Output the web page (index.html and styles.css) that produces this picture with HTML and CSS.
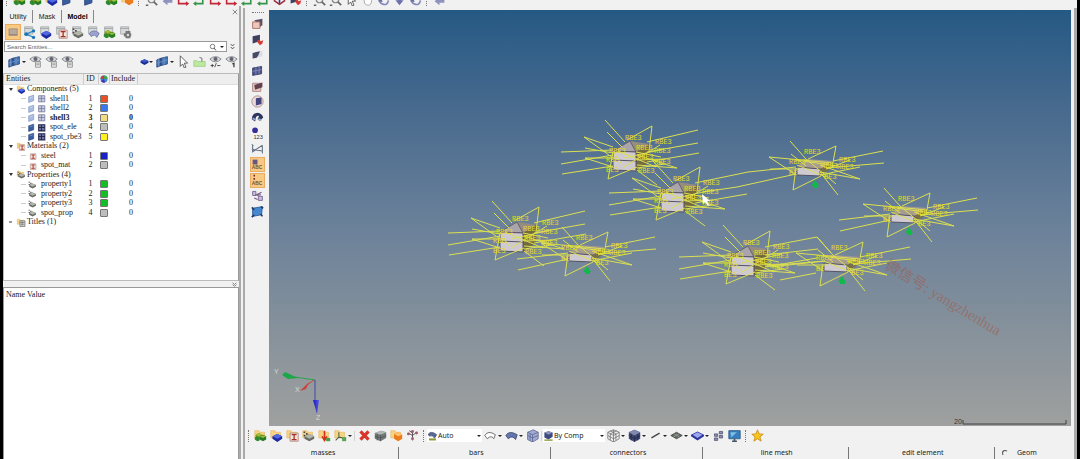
FILE: index.html
```html
<!DOCTYPE html>
<html lang="en">
<head>
<meta charset="utf-8">
<title>Model Browser</title>
<link rel="stylesheet" href="styles.css">
</head>
<body>
<svg class="defs" aria-hidden="true">
  <symbol id="folder" viewBox="0 0 16 16"><path d="M1 2h5l1 2h6v7H1z" fill="#f7d383" stroke="#e2b45c" stroke-width=".7"/></symbol>
  <symbol id="pile" viewBox="0 0 16 16"><path d="m6 5 4 2v4l-4 2-4-2V7z" fill="#8b9419"/><path d="m11 7 4 2v4l-4 2-4-2V9z" fill="#267c22"/><path d="m4 9 3 2v3l-3 1-3-2v-3z" fill="#2d8a32"/><path d="m6 5 4 2-4 2-4-2zm5 3 4 1-4 2-4-2z" fill="#9bbf3d"/></symbol>
  <symbol id="blob" viewBox="0 0 16 16"><path d="m9 6 6 3v3l-6 4-6-4V9z" fill="#1c2aa3"/><path d="m9 6 6 3-6 3-6-3z" fill="#5268e2"/></symbol>
  <symbol id="beam" viewBox="0 0 16 16"><path d="M5 5h10v10H5z" fill="#f1e7df" stroke="#a98077"/><path d="M7 7h6M7 13h6M10 7v6" stroke="#ab2f27" stroke-width="1.6"/></symbol>
  <symbol id="block" viewBox="0 0 16 16"><path d="m9 6 6 3v3l-6 3-6-3V9z" fill="#686b64"/><path d="m9 6 6 3-6 3-6-3z" fill="#b3b6aa"/><path d="M2 3h2v2H2zm0 4h2v2H2zm3-2h2v2H5z" fill="#42443f"/></symbol>
  <symbol id="f-pile" viewBox="0 0 16 16"><use href="#folder"/><use href="#pile"/></symbol>
  <symbol id="f-blob" viewBox="0 0 16 16"><use href="#folder"/><use href="#blob"/></symbol>
  <symbol id="f-beam" viewBox="0 0 16 16"><use href="#folder"/><use href="#beam"/></symbol>
  <symbol id="f-block" viewBox="0 0 16 16"><use href="#folder"/><use href="#block"/></symbol>
  <symbol id="f-load" viewBox="0 0 16 16"><use href="#folder"/><path d="M8 2v11M5 9l3 5 3-5" stroke="#d4301d" stroke-width="2" fill="none"/><path d="M10 11h5v4h-5z" fill="#4b9b42"/></symbol>
  <symbol id="f-axis" viewBox="0 0 16 16"><use href="#folder"/><path d="M6 4v6l-4 4m4-4 5 1" stroke="#4b604a" stroke-width="1.3" fill="none"/><path d="M10 10h5v5h-5z" fill="#5aa553"/></symbol>
  <symbol id="f-list" viewBox="0 0 16 16"><use href="#folder"/><path d="M6 5h9v10H6z" fill="#ddd" stroke="#444"/><path d="M7 8h7M7 11h7M10 6v8" stroke="#555"/></symbol>
  <symbol id="page" viewBox="0 0 16 16"><path d="M2 1h10v9H2z" fill="#d7d9da" stroke="#a4a8aa"/><path d="M2 3h10" stroke="#9a9ea0"/></symbol>
  <symbol id="p-link" viewBox="0 0 16 16"><use href="#page"/><path d="M4 10 13 6M4 10l9 4" stroke="#368bc8" stroke-width="1.5"/><g fill="#1976ba"><circle cx="4" cy="10" r="2.4"/><circle cx="13" cy="6" r="2"/><circle cx="13" cy="14" r="2"/></g></symbol>
  <symbol id="p-blob" viewBox="0 0 16 16"><use href="#page"/><use href="#blob"/></symbol>
  <symbol id="p-beam" viewBox="0 0 16 16"><use href="#page"/><use href="#beam"/></symbol>
  <symbol id="p-block" viewBox="0 0 16 16"><use href="#page"/><use href="#block"/></symbol>
  <symbol id="p-surf" viewBox="0 0 16 16"><use href="#page"/><path d="M3 9q5-6 12 0l-3 5q-2-5-7-1z" fill="#9ca3ce" stroke="#6972a5"/></symbol>
  <symbol id="p-pile" viewBox="0 0 16 16"><use href="#page"/><use href="#pile"/></symbol>
  <symbol id="p-gear" viewBox="0 0 16 16"><use href="#page"/><path d="M8 6h6v9H8zM6 9h9v4H6z" fill="#777"/><circle cx="11" cy="11" r="1.5" fill="#ddd"/></symbol>
  <symbol id="screen" viewBox="0 0 16 16"><path d="M2 4q0-1 2-1h9v9H2z" fill="#94877a"/><path d="M3 4h9v6H3z" fill="#b7a99b"/></symbol>
  <symbol id="mesh" viewBox="0 0 16 16"><path d="m1 6 5-2v9l-5 2zm5-2 8-2v9l-8 2z" fill="#4777b4" stroke="#263f75"/><path d="M3 5v9m7-11v9M1 10l13-4" stroke="#6f97cc"/></symbol>
  <symbol id="eye" viewBox="0 0 16 16"><path d="M1 5q7-6 14 0-7 7-14 0z" fill="#ddd" stroke="#777"/><circle cx="8" cy="5" r="2.5" fill="#606475"/></symbol>
  <symbol id="eye-list" viewBox="0 0 16 16"><use href="#eye"/><path d="M8 8h6v7H8zM9 10h4m-4 2h4" fill="#eee" stroke="#888"/></symbol>
  <symbol id="eye-pm" viewBox="0 0 16 16"><use href="#eye"/><path d="M2 13h4M4 11v4m3 0 2-5m1 3h4" stroke="#333"/></symbol>
  <symbol id="eye-one" viewBox="0 0 16 16"><use href="#eye"/><path d="m9 11 2-1v5" fill="none" stroke="#333" stroke-width="1.5"/></symbol>
  <symbol id="gem" viewBox="0 0 16 16"><path d="m8 4 7 3v3l-7 4-7-4V7z" fill="#172b94"/><path d="m8 4 7 3-7 3-7-3z" fill="#4055ca"/></symbol>
  <symbol id="cursor" viewBox="0 0 16 16"><path d="m4 1 9 9H9l2 5-2 1-2-5-3 3z" fill="#fff" stroke="#444"/></symbol>
  <symbol id="green" viewBox="0 0 16 16"><path d="M1 7q4-1 5 1h9v6H1z" fill="#bce8a0" stroke="#a1cf86"/><path d="m8 3 3 1v4" stroke="#555" fill="none"/></symbol>
  <symbol id="sheet" viewBox="0 0 16 16"><path d="m2 5 9-3v10l-9 3z" fill="#a8badd" stroke="#7591c6"/><path d="m4 7 5-2" stroke="#dce5f4"/></symbol>
  <symbol id="sheet-on" viewBox="0 0 16 16"><path d="m2 5 9-3v10l-9 3z" fill="#385da0" stroke="#274278"/><path d="m4 7 5-2" stroke="#96b2dd"/></symbol>
  <symbol id="grid" viewBox="0 0 16 16"><path d="M2 3h11v11H2zM2 8h11M7 3v11" fill="#c8cbe0" stroke="#777b9e" stroke-width="1.4"/></symbol>
  <symbol id="grid-on" viewBox="0 0 16 16"><path d="M2 3h11v11H2zM2 8h11M7 3v11" fill="#747aa5" stroke="#26294d" stroke-width="1.8"/></symbol>
  <symbol id="wheel" viewBox="0 0 16 16"><circle cx="8" cy="8" r="7" fill="#358be0"/><path d="M8 8V1a7 7 0 0 1 7 7z" fill="#3ca54a"/><path d="M8 8H1a7 7 0 0 1 7-7z" fill="#c43c4a"/><path d="m8 8 2 7a7 7 0 0 1-8-3z" fill="#5030a0"/></symbol>
  <symbol id="x-red" viewBox="0 0 16 16"><path d="m3 3 10 10M13 3 3 13" stroke="#d83429" stroke-width="4"/></symbol>
  <symbol id="cube-gray" viewBox="0 0 16 16"><path d="m1 5 8-3 6 2v7l-7 4-7-3z" fill="#737878"/><path d="m1 5 8-3 6 2-7 3z" fill="#b3b8b7"/><path d="M8 7v8M4 6v8M1 9l7 2 7-3" stroke="#4f5454" fill="none"/></symbol>
  <symbol id="cube-orange" viewBox="0 0 16 16"><use href="#folder"/><path d="m5 6 5-2 5 3v5l-5 3-5-3z" fill="#eb7b1c"/><path d="m5 6 5-2 5 3-5 2z" fill="#ffc26d"/></symbol>
  <symbol id="branches" viewBox="0 0 16 16"><path d="M8 14V3M3 5l5 3 5-4M4 2l4 3" stroke="#555" stroke-width="1.2" fill="none"/><g fill="#a45c68"><circle cx="3" cy="6" r="1.8"/><circle cx="8" cy="3" r="1.8"/><circle cx="13" cy="5" r="1.8"/><circle cx="8" cy="12" r="1.8"/></g></symbol>
  <symbol id="surf-mode" viewBox="0 0 16 16"><path d="M2 5q4-5 12 1l-3 5Q8 6 3 8z" fill="#576897" stroke="#364168"/><path d="M3 13h10" stroke="#8d9830" stroke-width="3"/></symbol>
  <symbol id="surf-line" viewBox="0 0 16 16"><path d="M1 8q4-7 13-1l-2 5Q9 7 4 12z" fill="#fff" stroke="#555"/></symbol>
  <symbol id="surf-fill" viewBox="0 0 16 16"><path d="M1 8q4-7 14-1l-2 6Q9 7 4 12z" fill="#6476ad" stroke="#39466f"/></symbol>
  <symbol id="cube-blue" viewBox="0 0 16 16"><path d="m2 4 7-3 6 3v8l-7 4-6-3z" fill="#a3abd4" stroke="#5e6794"/><path d="m2 4 6 3 7-3M8 7v9M5 6v8m-3-6 6 3 7-3" stroke="#5e6794" fill="none"/></symbol>
  <symbol id="cube-comp" viewBox="0 0 16 16"><path d="m2 3 6-2 6 2v6l-6 4-6-3z" fill="#3e4b80"/><path d="m2 3 6-2 6 2-6 3z" fill="#8791ba"/><path d="M2 14h12" stroke="#8d9830" stroke-width="2"/></symbol>
  <symbol id="cube-wire" viewBox="0 0 16 16"><path d="m1 4 7-3 7 3v8l-7 4-7-4zm0 0 7 4 7-4M8 8v8M1 8l7 4 7-4M4 2l7 4v8M12 2 4 6v8M8 1v7" fill="none" stroke="#727272"/></symbol>
  <symbol id="cube-dark" viewBox="0 0 16 16"><path d="m1 4 7-3 7 3v8l-7 4-7-4z" fill="#41486f"/><path d="m1 4 7-3 7 3-7 4z" fill="#8189ae"/><path d="M8 8v8M4 6v8m8-8v8M1 8l7 4 7-4" stroke="#252a4d" fill="none"/></symbol>
  <symbol id="line" viewBox="0 0 16 16"><path d="m3 11 10-6" stroke="#444" stroke-width="1.7"/></symbol>
  <symbol id="quad" viewBox="0 0 16 16"><path d="m1 8 7-4 7 4-7 4z" fill="#666b66" stroke="#3f443f"/><path d="m5 6 7 4m-1-4-7 4" stroke="#979c97"/></symbol>
  <symbol id="slab" viewBox="0 0 16 16"><path d="m0 7 8-4 8 4v2l-8 5-8-5z" fill="#2d369d"/><path d="m2 7 6-3 6 3-6 4z" fill="#9ca6ef"/></symbol>
  <symbol id="bits" viewBox="0 0 16 16"><path d="M3 6h4v3H3zm6-3h4v3H9zM3 11h4v3H3zm6-3h4v3H9z" fill="#8b91af" stroke="#535873"/></symbol>
  <symbol id="monitor" viewBox="0 0 16 16"><path d="M1 2h14v10H1z" fill="#387ebc" stroke="#295a83"/><path d="M3 4h8L4 10z" fill="#7fc1e5"/><path d="M8 12v2M5 15h6" stroke="#456" stroke-width="2"/></symbol>
  <symbol id="star" viewBox="0 0 16 16"><path d="m8 1 2 5 5 .4-4 3.4 1.5 5.2L8 12l-4.5 3L5 9.800 1 6.400 6 6z" fill="#f9c51c" stroke="#c58c11"/></symbol>
  <symbol id="v-box" viewBox="0 0 16 16"><path d="m4 4 10-2v8l-3 2z" fill="#565164"/><path d="M2 6h9v8H2z" fill="#edc8ba" stroke="#a65e55"/></symbol>
  <symbol id="v-mask" viewBox="0 0 16 16"><path d="m2 4 9-2v8l-9 3z" fill="#3d4160"/><path d="m7 10 3-2 2 2 3-1-1 4-3 2z" fill="#d63a35"/></symbol>
  <symbol id="v-part" viewBox="0 0 16 16"><path d="m2 6 12-3v7L2 13z" fill="#dcdde5"/><path d="m2 6 9-2-2 5-2 3-5 1z" fill="#464b68"/></symbol>
  <symbol id="v-all" viewBox="0 0 16 16"><path d="m2 5 11-2v9L2 14z" fill="#4a5288" stroke="#303765"/><path d="M6 4v9m4-10v9M2 9l11-2" stroke="#8a91bb"/></symbol>
  <symbol id="v-win" viewBox="0 0 16 16"><path d="M2 4h10v10H2z" fill="#e8cbc5" stroke="#a07878"/><path d="m4 6 10-3v6l-9 3z" fill="#62404e"/></symbol>
  <symbol id="v-sphere" viewBox="0 0 16 16"><circle cx="8" cy="8" r="7" fill="#eadadb" stroke="#a88"/><path d="m6 4 7-1v8l-7 2z" fill="#45457d"/></symbol>
  <symbol id="v-find" viewBox="0 0 16 16"><path d="M1 10q0-7 7-8 6 1 7 6l-4 4-3-2 2-4q-3-1-4 2l-1 5z" fill="#2d365e"/><path d="m2 9 4 2m3-1 4 1" stroke="#97a8cf" stroke-width="2"/></symbol>
  <symbol id="v-num" viewBox="0 0 16 16"><circle cx="5" cy="4" r="3.500" fill="#3a2c96"/><text x="3" y="15" font-size="7" font-family="Liberation Sans" fill="#333">123</text></symbol>
  <symbol id="v-angle" viewBox="0 0 16 16"><path d="M2 3v10m12-9v10M2 12l12-8M1 9l13 2M1 3l2 2" stroke="#687285" stroke-width="1.3" fill="none"/></symbol>
  <symbol id="v-abc" viewBox="0 0 16 16"><path d="M2 2h6v6H2z" fill="#655784"/><text x="1" y="14" font-size="6" font-weight="700" font-family="Liberation Sans" fill="#75512e">ABC</text></symbol>
  <symbol id="v-dots" viewBox="0 0 16 16"><path d="M3 1h2v2H3zm0 4h2v2H3z" fill="#742e24"/><text x="1" y="14" font-size="6" font-weight="700" font-family="Liberation Sans" fill="#75512e">ABC</text></symbol>
  <symbol id="v-swap" viewBox="0 0 16 16"><path d="M2 3h4v5H2zm7 6h5v5H9z" fill="#c6bedc" stroke="#6c5d8b"/><path d="m5 8 8-4M4 11l4 2m-1-5 5-1" stroke="#7b5a85" stroke-width="1.5"/></symbol>
  <symbol id="v-patch" viewBox="0 0 16 16"><path d="m2 4 12-2-1 10-11 2z" fill="#4389d1" stroke="#2b548d"/><path d="m1 3 3 3m8-4 3 2M1 15l3-3m8-1 2 3" stroke="#223c6c" stroke-width="2"/></symbol>
  <symbol id="axes-red" viewBox="0 0 16 16"><path d="M2 2v11h11" stroke="#c22a38" stroke-width="2" fill="none"/><path d="m11 10 4 3-4 3z" fill="#c22a38"/></symbol>
  <symbol id="axes-green" viewBox="0 0 16 16"><path d="M2 13h10V2" stroke="#369548" stroke-width="2" fill="none"/><path d="m4 10-4 3 4 3z" fill="#369548"/></symbol>
  <symbol id="lens" viewBox="0 0 16 16"><circle cx="8" cy="8" r="4" fill="#eee" stroke="#888" stroke-width="1.500"/><path d="m11 11 4 4M1 15h3" stroke="#666" stroke-width="2"/></symbol>
  <symbol id="turn" viewBox="0 0 16 16"><path d="M3 8q0 5 5 6t6-5" stroke="#8288b8" stroke-width="2" fill="none"/><path d="m1 10 4-4 2 5z" fill="#686fa4"/></symbol>
  <symbol id="back" viewBox="0 0 16 16"><path d="m2 10 6-5v3h6v4H8v3z" fill="#8e93bd"/></symbol>
  <symbol id="down" viewBox="0 0 16 16"><path d="M6 1h4v8h3l-5 6-5-6h3z" fill="#6c72a9"/></symbol>
  <symbol id="iso" viewBox="0 0 16 16"><path d="M8 1v13" stroke="#333f94" stroke-width="2"/><path d="m1 9 7 5 7-5" stroke="#9b3040" stroke-width="2" fill="none"/></symbol>
  <symbol id="hand" viewBox="0 0 16 16"><path d="M4 2v8q0 5 5 5 4 0 4-6V3" stroke="#999" fill="#fff"/></symbol>
</svg>

<main class="app">
  <header class="top-tools" aria-label="Standard toolbar">
    <i class="grip"></i>
    <button aria-label="New"><svg><use href="#f-pile"/></svg></button>
    <button aria-label="Open"><svg><use href="#pile"/></svg></button>
    <button aria-label="Import"><svg><use href="#f-blob"/></svg></button>
    <button aria-label="Save"><svg><use href="#sheet-on"/></svg></button>
    <i class="space"></i>
    <button aria-label="Export"><svg><use href="#sheet-on"/></svg></button>
    <i class="space"></i>
    <button aria-label="Component"><svg><use href="#pile"/></svg></button>
    <button aria-label="Colour"><svg><use href="#cube-orange"/></svg></button>
    <i class="grip"></i>
    <button aria-label="Zoom"><svg><use href="#lens"/></svg></button>
    <button aria-label="Previous view"><svg><use href="#back"/></svg></button>
    <button aria-label="XY view"><svg><use href="#axes-red"/></svg></button>
    <button aria-label="YX view"><svg><use href="#axes-green"/></svg></button>
    <button aria-label="XZ view"><svg><use href="#axes-red"/></svg></button>
    <button aria-label="ZX view"><svg><use href="#axes-red"/></svg></button>
    <button aria-label="YZ view"><svg><use href="#axes-green"/></svg></button>
    <button aria-label="ZY view"><svg><use href="#axes-green"/></svg></button>
    <button aria-label="Iso view"><svg><use href="#iso"/></svg></button>
    <button aria-label="Mask"><svg><use href="#v-mask"/></svg></button>
    <i class="grip"></i>
    <button aria-label="Zoom in"><svg><use href="#lens"/></svg></button>
    <button aria-label="Zoom out"><svg><use href="#lens"/></svg></button>
    <button aria-label="Pointer"><svg><use href="#cursor"/></svg></button>
    <button aria-label="Pan"><svg><use href="#hand"/></svg></button>
    <button aria-label="Rotate left"><svg><use href="#turn"/></svg></button>
    <button aria-label="Down"><svg><use href="#down"/></svg></button>
    <button aria-label="Rotate"><svg><use href="#turn"/></svg></button>
    <i class="grip"></i>
    <button aria-label="Spin"><svg><use href="#back"/></svg></button>
  </header>

  <div class="work">
    <aside class="browser">
      <nav class="tabs">
        <button>Utility</button><button>Mask</button><button class="current">Model</button>
        <button class="close" aria-label="Close"><svg viewBox="0 0 8 8"><path d="m1 1 6 6m0-6L1 7" stroke="#666"/></svg></button>
      </nav>
      <div class="views">
        <button class="pressed" aria-label="Model view"><svg><use href="#screen"/></svg></button>
        <button aria-label="Connections"><svg><use href="#p-link"/></svg></button>
        <button aria-label="Components"><svg><use href="#p-blob"/></svg></button>
        <button aria-label="Materials"><svg><use href="#p-beam"/></svg></button>
        <button aria-label="Properties"><svg><use href="#p-block"/></svg></button>
        <button aria-label="Surfaces"><svg><use href="#p-surf"/></svg></button>
        <button aria-label="Assemblies"><svg><use href="#p-pile"/></svg></button>
        <button aria-label="Loads"><svg><use href="#p-gear"/></svg></button>
      </div>
      <div class="search">
        <label class="field"><input type="text" placeholder="Search Entities..." aria-label="Search Entities"><svg viewBox="0 0 16 16"><circle cx="7" cy="7" r="4.500" fill="none" stroke="#555" stroke-width="1.500"/><path d="m10 10 4 5" stroke="#555" stroke-width="2"/></svg><i class="caret"></i></label>
        <button aria-label="More"><svg viewBox="0 0 8 12"><path d="m1 2 3 3 3-3M1 7l3 3 3-3" fill="none" stroke="#333" stroke-width="1.500"/></svg></button>
      </div>
      <div class="actions">
        <button aria-label="Show mesh"><svg><use href="#mesh"/></svg></button><i class="caret"></i>
        <button aria-label="Show"><svg><use href="#eye-list"/></svg></button>
        <button aria-label="Hide"><svg><use href="#eye-list"/></svg></button>
        <button aria-label="Reverse"><svg><use href="#eye-list"/></svg></button>
        <i class="fill"></i>
        <button class="small" aria-label="Component"><svg><use href="#gem"/></svg></button><i class="caret"></i>
        <button aria-label="Display mesh"><svg><use href="#mesh"/></svg></button><i class="caret"></i>
        <button aria-label="Select"><svg><use href="#cursor"/></svg></button>
        <button aria-label="Add to panel"><svg><use href="#green"/></svg></button>
        <button aria-label="Show or hide"><svg><use href="#eye-pm"/></svg></button>
        <button aria-label="Isolate"><svg><use href="#eye-one"/></svg></button>
      </div>
      <section class="tree">
        <table>
          <thead><tr><th class="name">Entities</th><th class="id">ID</th><th class="color"><svg aria-label="Color"><use href="#wheel"/></svg></th><th class="inc">Include</th><th></th></tr></thead>
          <tbody>
            <tr class="group"><td colspan="5"><span class="cell"><i class="arrow"></i><svg><use href="#f-blob"/></svg>Components (5)</span></td></tr>
            <tr><td><span class="cell leaf"><svg><use href="#sheet"/></svg><svg><use href="#grid"/></svg>shell1</span></td><td>1</td><td><b class="sw red"></b></td><td>0</td><td></td></tr>
            <tr><td><span class="cell leaf"><svg><use href="#sheet"/></svg><svg><use href="#grid"/></svg>shell2</span></td><td>2</td><td><b class="sw blue"></b></td><td>0</td><td></td></tr>
            <tr class="active"><td><span class="cell leaf"><svg><use href="#sheet"/></svg><svg><use href="#grid"/></svg>shell3</span></td><td>3</td><td><b class="sw sand"></b></td><td>0</td><td></td></tr>
            <tr><td><span class="cell leaf"><svg><use href="#sheet-on"/></svg><svg><use href="#grid-on"/></svg>spot_ele</span></td><td>4</td><td><b class="sw gray"></b></td><td>0</td><td></td></tr>
            <tr><td><span class="cell leaf"><svg><use href="#sheet-on"/></svg><svg><use href="#grid-on"/></svg>spot_rbe3</span></td><td>5</td><td><b class="sw yellow"></b></td><td>0</td><td></td></tr>
            <tr class="group"><td colspan="5"><span class="cell"><i class="arrow"></i><svg><use href="#f-beam"/></svg>Materials (2)</span></td></tr>
            <tr><td><span class="cell leaf one"><svg><use href="#beam"/></svg>steel</span></td><td>1</td><td><b class="sw navy"></b></td><td>0</td><td></td></tr>
            <tr><td><span class="cell leaf one"><svg><use href="#beam"/></svg>spot_mat</span></td><td>2</td><td><b class="sw gray"></b></td><td>0</td><td></td></tr>
            <tr class="group"><td colspan="5"><span class="cell"><i class="arrow"></i><svg><use href="#f-block"/></svg>Properties (4)</span></td></tr>
            <tr><td><span class="cell leaf one"><svg><use href="#block"/></svg>property1</span></td><td>1</td><td><b class="sw green"></b></td><td>0</td><td></td></tr>
            <tr><td><span class="cell leaf one"><svg><use href="#block"/></svg>property2</span></td><td>2</td><td><b class="sw green"></b></td><td>0</td><td></td></tr>
            <tr><td><span class="cell leaf one"><svg><use href="#block"/></svg>property3</span></td><td>3</td><td><b class="sw green"></b></td><td>0</td><td></td></tr>
            <tr><td><span class="cell leaf one"><svg><use href="#block"/></svg>spot_prop</span></td><td>4</td><td><b class="sw gray"></b></td><td>0</td><td></td></tr>
            <tr class="group"><td colspan="5"><span class="cell"><i class="arrow shut"></i><svg><use href="#f-list"/></svg>Titles (1)</span></td></tr>
          </tbody>
        </table>
      </section>
      <div class="split"><svg viewBox="0 0 8 8"><path d="m1 1 3 3 3-3M1 4l3 3 3-3" fill="none" stroke="#444"/></svg></div>
      <section class="values"><h2>Name Value</h2></section>
    </aside>

    <section class="stage">
      <div class="scene">
        <div class="side-tools">
          <i class="hgrip"></i>
          <div class="stack">
            <button aria-label="Box"><svg><use href="#v-box"/></svg></button>
            <button aria-label="Mask"><svg><use href="#v-mask"/></svg></button>
            <button aria-label="Reverse mask"><svg><use href="#v-part"/></svg></button>
            <button aria-label="Unmask all"><svg><use href="#v-all"/></svg></button>
            <button aria-label="Window mask"><svg><use href="#v-win"/></svg></button>
            <button aria-label="Spherical clipping"><svg><use href="#v-sphere"/></svg></button>
            <button aria-label="Find"><svg><use href="#v-find"/></svg></button>
            <button aria-label="Numbers"><svg><use href="#v-num"/></svg></button>
            <button aria-label="Measure"><svg><use href="#v-angle"/></svg></button>
            <button class="pressed" aria-label="Element labels"><svg><use href="#v-abc"/></svg></button>
            <button class="pressed" aria-label="Node labels"><svg><use href="#v-dots"/></svg></button>
            <button aria-label="Convert"><svg><use href="#v-swap"/></svg></button>
            <button aria-label="Patch"><svg><use href="#v-patch"/></svg></button>
          </div>
        </div>
        <svg class="canvas" viewBox="269 10 802 416" role="img" aria-label="Spot weld model">
          <defs>
            <g id="flat">
              <path d="m-11-4 9-8 27 2-13 8z" fill="#a69c8f"/><path d="m12-2 13-8-1 7-12 8z" fill="#79704b"/><path d="m-11-4 23 2v7l-23-1z" fill="#cfcad1" stroke="#555262"/>
              <path class="rod" d="m-18-30 16 18M-17-17-2-5m14 6 18 23M28-25 0-12m28-13-4 22M-15 19l3-22m-3 22L13 5m-52-19 26 17m-26-17 64 6M75-20 25-10M76-8 18-3M52 8 12-6M52 8 12 1m-50-3h30m-3-4 29 12m0-8 24-9M-2-12l30 25M-13-11 30-5m-18 9 40-8"/>
              <g class="tag"><text x="-4" y="-17">RBE3</text><text x="31" y="-9">RBE3</text><text x="-19" y="-7">RBE3</text><text x="-19" y="4">BE</text><text x="13" y="-3">RBE3</text><text x="29" y="-2">RBE3</text><text x="16" y="8">BE3</text></g>
              <path d="m7 9 4 6H3zm-2 6h5v2H5z" fill="#12b84a"/>
            </g>
            <path id="flat-left" class="rod" d="m-63 2 51-6m-50 17 50-11"/>
            <g id="tall">
              <path d="m6-20 19 3-13 9z" fill="#978c80"/><path d="m12-9 13-8v18l-13 9z" fill="#746a42"/><path d="m-11-10 17-10 6 11z" fill="#aaa5aa" stroke="#69616b"/><path d="m-11-10 23 1v19l-23-1z" fill="#cfcad1" stroke="#555262"/><path d="m-11-1 23 1" stroke="#555262"/>
              <path class="rod" d="M-19-41 1-19m-18-10 15 15M28-35 3-21m25-14-3 25M-40-24l29 10m-29-10 29 21m-28-10 28 5m-28 5 28 9m-28-9h28m-52-6 52-2m-52 14 52-9m-51 19 51-8m86-13-52 9M53 7 13-6M53 7 13 4m-29 14 5-27m-5 27L13 6m0 3 20 15M-6-10l38 16M0-3l40-9M0 6l36-22M-11-10-2 4m14-13 25 5m-24 3 28-1M13 7l28-4"/>
              <g class="tag"><text x="1" y="-21">RBE3</text><text x="31" y="-17">RBE3</text><text x="-15" y="-8">RBE3</text><text x="-18" y="1">RBE</text><text x="-18" y="11">BE3</text><text x="12" y="-11">RBE3</text><text x="30" y="-8">RBE3</text><text x="13" y="-2">RBE3</text><text x="30" y="3">RBE3</text><text x="14" y="12">RBE3</text></g>
            </g>
            <path id="tall-right" class="rod" d="m74-31-51 12m51 1L23-9"/>
            <linearGradient id="cone" x2="1"><stop stop-color="#1919b8"/><stop offset="1" stop-color="#5858e8"/></linearGradient>
          </defs>
          <use href="#tall" x="624" y="161"/><use href="#tall-right" x="624" y="161"/>
          <use href="#tall" x="672" y="202"/>
          <use href="#tall" x="511" y="242"/><use href="#tall-right" x="511" y="242"/>
          <use href="#tall" x="742" y="266"/>
          <use href="#flat" x="808" y="171"/>
          <use href="#flat" x="902" y="218"/><use href="#flat-left" x="902" y="218"/>
          <use href="#flat" x="835" y="267"/>
          <use href="#flat" x="580" y="257"/><use href="#flat-left" x="580" y="257"/>
          <path class="rod" d="m695 183 53-11 48-5m-93 25 34-5 59-13M765 247l52-10 14 16m-66 2 53-6m-48 18 55-6m-45 19 36-7m-51-7 60-5"/>
          <path d="m702 194 1 10 2-2 3 4 1-1-2-4h3z" fill="#fff"/>
          <g class="triad">
            <path d="M315 380 295 377" stroke="#28a44b"/><path d="m282 375 3-3 13 6-10 1z" fill="#1ca748"/>
            <path d="m314 380-7 5" stroke="#d53e35"/><path d="m309 382-3 7-6 2z" fill="#cf3f38"/>
            <path d="M315 380v21" stroke="#4146aa"/><path d="M313 400h6l-2 14z" fill="url(#cone)"/>
            <text x="274" y="374">Y</text><text x="295" y="392">X</text><text x="316" y="420">Z</text>
          </g>
          <text class="mark" transform="translate(884 268) rotate(31)">微信号: yangzhenhua</text>
          <path d="M963 420v4h103v-4" fill="none" stroke="#3f4445"/><text class="scale" x="954" y="424">20</text>
        </svg>
      </div>

      <div class="bottom-tools">
        <i class="grip"></i>
        <button aria-label="New component"><svg><use href="#f-pile"/></svg></button>
        <button aria-label="Component collector"><svg><use href="#f-blob"/></svg></button>
        <button aria-label="Material collector"><svg><use href="#f-beam"/></svg></button>
        <button aria-label="Property collector"><svg><use href="#f-block"/></svg></button>
        <button aria-label="Load collector"><svg><use href="#f-load"/></svg></button>
        <button aria-label="System collector"><svg><use href="#f-axis"/></svg></button><i class="caret"></i>
        <i class="rule"></i>
        <button aria-label="Delete"><svg><use href="#x-red"/></svg></button>
        <button aria-label="Card edit"><svg><use href="#cube-gray"/></svg></button>
        <button aria-label="Organize"><svg><use href="#cube-orange"/></svg></button>
        <button aria-label="Renumber"><svg><use href="#branches"/></svg></button>
        <i class="grip"></i>
        <label class="combo"><svg><use href="#surf-mode"/></svg><select aria-label="Geometry colour"><option>Auto</option></select><i class="caret"></i></label>
        <button aria-label="Wireframe geometry"><svg><use href="#surf-line"/></svg></button><i class="caret"></i>
        <button aria-label="Shaded geometry"><svg><use href="#surf-fill"/></svg></button><i class="caret"></i>
        <button aria-label="Transparency"><svg><use href="#cube-blue"/></svg></button>
        <i class="rule"></i>
        <label class="combo wide"><svg><use href="#cube-comp"/></svg><select aria-label="Element colour"><option>By Comp</option></select><i class="caret"></i></label>
        <button aria-label="Wireframe elements"><svg><use href="#cube-wire"/></svg></button><i class="caret"></i>
        <button aria-label="Shaded elements"><svg><use href="#cube-dark"/></svg></button><i class="caret"></i>
        <button aria-label="1D display"><svg><use href="#line"/></svg></button><i class="caret"></i>
        <button aria-label="2D display"><svg><use href="#quad"/></svg></button><i class="caret"></i>
        <button aria-label="Layers"><svg><use href="#slab"/></svg></button><i class="caret"></i>
        <button aria-label="Shrink"><svg><use href="#bits"/></svg></button>
        <button aria-label="Display options"><svg><use href="#monitor"/></svg></button>
        <i class="grip"></i>
        <button aria-label="Favourites"><svg><use href="#star"/></svg></button>
      </div>

      <div class="panel">
        <button>masses</button><button>bars</button><button>connectors</button><button>line mesh</button><button>edit element</button>
        <label><input type="radio" name="page">Geom</label>
      </div>
    </section>
  </div>
</main>
</body>
</html>
```

FILE: styles.css
```css
* { box-sizing: border-box; }

body {
  margin: 0;
  background: #000;
  color: #222;
  font: 7px/8px "Noto Sans", sans-serif;
}

button, input, select {
  margin: 0;
  padding: 0;
  border: 0;
  background: none;
  color: inherit;
  font: inherit;
}

svg { display: block; flex: none; }
.defs { position: absolute; width: 0; height: 0; }

.app {
  display: flex;
  flex-direction: column;
  height: 100vh;
  margin: 0 3px;
  background: #f1f1f1;
  overflow: hidden;
}

button svg { width: 13px; height: 13px; margin: auto; }

.grip { flex: none; width: 2px; height: 12px; margin: 0 3px; border-left: 1px dotted #777; }
.rule { flex: none; width: 1px; height: 10px; margin: 0 1px; background: #d3d3d3; }
.caret {
  flex: none;
  width: 4px;
  height: 2px;
  margin-right: 1px;
  border: 2px solid transparent;
  border-top-color: #222;
  border-bottom: 0;
}

.top-tools {
  display: flex;
  align-items: flex-end;
  flex: none;
  height: 6px;
  overflow: hidden;
}
.top-tools button { flex: none; width: 16px; }
.top-tools .space { width: 6px; }

.work { display: flex; flex: 1; min-height: 0; }

.browser {
  display: flex;
  flex-direction: column;
  flex: none;
  width: 238px;
  border-right: 2px solid #aaa;
}

.tabs { display: flex; height: 18px; align-items: flex-end; padding: 0 0 1px 1px; font: 7px/12px "Liberation Sans", sans-serif; }
.tabs button { width: 29px; height: 13px; border-right: 1px solid #888; }
.tabs .current { width: 32px; font-weight: 700; color: #000; }
.tabs .close { width: 8px; height: 12px; margin: 0 0 5px auto; border: 0; }
.close svg { width: 6px; height: 6px; }

.views { display: flex; height: 16px; padding-left: 2px; }
.views button { width: 16px; height: 16px; }
.views .pressed, .stack .pressed { background: #f8c984; border: 1px solid #e8ad60; }

.search { display: flex; align-items: center; gap: 3px; height: 13px; padding: 1px 4px 1px 1px; }
.search .field { display: flex; align-items: center; flex: 1; height: 11px; border: 1px solid #999; background: #fff; }
.search input { flex: 1; min-width: 0; height: 9px; padding-left: 2px; outline: 0; font: 6px/8px "Liberation Sans", sans-serif; }
.search input::placeholder { color: #666; opacity: 1; }
.search .field svg { width: 8px; height: 8px; }
.search .field .caret { margin: 0 2px 0 3px; }
.search button svg { width: 5px; height: 7px; }

.actions { display: flex; align-items: center; height: 20px; padding: 0 0 3px 3px; }
.actions button { width: 16px; flex: none; }
.actions .small { width: 10px; }
.actions .small svg { width: 9px; }
.actions .fill { flex: 1; }

.tree {
  flex: none;
  height: 208px;
  border: 1px solid #bbb;
  border-right-color: #999;
  background: #fff;
  font: 8px/8px "Liberation Serif", serif;
}
.tree table { width: 100%; border-collapse: collapse; table-layout: fixed; }
.tree thead { height: 10px; background: #eee; }
.tree tbody { height: 143px; }
.tree th, .tree td { height: 9px; padding: 0; font-weight: 400; text-align: center; line-height: 8px; }
.tree th { border-right: 1px solid #ccc; border-bottom: 1px solid #ddd; }
.tree th:last-child { border-right: 0; }
.tree th.name { width: 79px; padding-left: 2px; text-align: left; }
.tree .id { width: 15px; }
.tree .color { width: 11px; }
.tree .inc { width: 28px; }
.tree td:nth-child(4) { text-align: right; padding-right: 4px; }
.tree th svg { width: 8px; height: 8px; margin: auto; }

.cell { display: flex; align-items: center; height: 9px; white-space: nowrap; }
.cell svg { width: 10px; height: 9px; margin-right: 2px; }
.group .cell svg { margin-left: -1px; margin-right: 1px; }
.arrow { width: 4px; margin: 0 4px 0 5px; border: 2px solid transparent; border-top: 3px solid #333; border-bottom: 0; }
.arrow.shut { width: 3px; border: 1px solid #999; margin-right: 5px; }
.leaf { margin-left: 17px; }
.leaf::before { content: ""; width: 5px; height: 1px; margin-right: 1px; background: #ccc; }
.leaf svg { margin-right: 0; }
.leaf svg + svg { margin-right: 3px; }
.leaf.one svg { margin-right: 4px; }
.active td { font-weight: 700; }

.sw { display: block; width: 8px; height: 8px; margin: auto; border: 1px solid #777; border-radius: 1px; }
.red { background: #e85128; }
.blue { background: #3979ec; }
.sand { background: #f2dc80; }
.gray { background: #bdbdbd; }
.yellow { background: #fff01e; }
.navy { background: #1922c4; }
.green { background: #12bd25; }

.split { display: flex; justify-content: flex-end; align-items: center; flex: none; height: 6px; padding-right: 2px; }
.split svg { width: 5px; height: 5px; }

.values { flex: 1; border: 1px solid #999; border-bottom: 0; background: #fff; }
.values h2 { margin: 0; padding: 2px; font: 8px/9px "Liberation Serif", serif; }

.stage {
  display: flex;
  flex-direction: column;
  flex: 1;
  min-width: 0;
  margin: 2px 0 0 2px;
  border-left: 2px solid #aaa;
  border-right: 3px solid #aaa;
}

.scene { display: flex; flex: 1; min-height: 0; padding: 2px 3px 0 0; }

.side-tools { flex: none; width: 24px; padding: 2px 3px 0 4px; }
.hgrip { display: block; width: 12px; margin: 0 auto 3px; border-top: 1px dotted #777; }
.stack { display: flex; flex-direction: column; justify-content: space-between; align-items: center; height: 203px; }
.stack button { width: 15px; height: 15px; }

.canvas {
  flex: 1;
  min-width: 0;
  height: 100%;
  background: linear-gradient(#255984, #486a8e 24%, #6b819a 52%, #87929b 78%, #9fa09f);
}
.rod { fill: none; stroke: #dce04f; stroke-width: 1; }
.tag { fill: #e2da22; font: 7px "Liberation Mono", monospace; }
.triad { fill: none; }
.triad text { fill: #d8d8d8; font: 7px "Liberation Sans", sans-serif; }
.mark { fill: #a5543f; fill-opacity: .5; font: 15px "Liberation Serif", "Noto Sans CJK SC", serif; }
.scale { fill: #333; font: 7px "Liberation Sans", sans-serif; }

.bottom-tools { display: flex; align-items: center; flex: none; height: 21px; padding-bottom: 2px; overflow: hidden; }
.bottom-tools button { flex: none; width: 16px; }
.bottom-tools .grip { margin: 0 2px 0 3px; }
.combo { display: flex; align-items: center; flex: none; width: 55px; height: 13px; background: #fff; }
.combo.wide { width: 62px; }
.combo svg { width: 11px; height: 12px; }
.combo select { flex: 1; min-width: 0; appearance: none; outline: 0; font-size: 7px; }

.panel { display: grid; grid-template-columns: 154fr 152fr 151fr 146fr 146fr 79fr; flex: none; height: 12px; }
.panel button { height: 12px; padding-left: 3px; border-right: 1px solid #777; }
.panel label { display: flex; align-items: center; gap: 9px; padding-left: 7px; }
.panel input { appearance: none; width: 6px; height: 6px; border: 1px solid transparent; border-top-color: #555; border-left-color: #555; border-radius: 50%; }
```
